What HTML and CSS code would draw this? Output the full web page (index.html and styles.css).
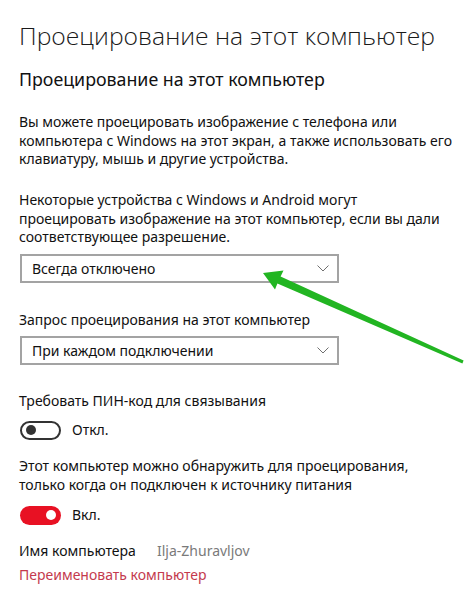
FILE: index.html
```html
<!DOCTYPE html>
<html lang="ru">
<head>
<meta charset="utf-8">
<link rel="stylesheet" href="styles.css">
</head>
<body>
<main class="page">
  <h1 class="title">Проецирование на этот компьютер</h1>
  <h2 class="subtitle">Проецирование на этот компьютер</h2>
  <p class="text p1">Вы можете проецировать изображение с телефона или<br>компьютера с Windows на этот экран, а также использовать его<br>клавиатуру, мышь и другие устройства.</p>
  <p class="text p2">Некоторые устройства с Windows и Android могут<br>проецировать изображение на этот компьютер, если вы дали<br>соответствующее разрешение.</p>
  <div class="select s1"><span>Всегда отключено</span><svg class="chev" width="12" height="7" viewBox="0 0 12 7"><polyline points="0.5,0.5 6,6 11.5,0.5" fill="none" stroke="#707070" stroke-width="1"/></svg></div>
  <p class="text label l1">Запрос проецирования на этот компьютер</p>
  <div class="select s2"><span>При каждом подключении</span><svg class="chev" width="12" height="7" viewBox="0 0 12 7"><polyline points="0.5,0.5 6,6 11.5,0.5" fill="none" stroke="#707070" stroke-width="1"/></svg></div>
  <p class="text label l2">Требовать ПИН-код для связывания</p>
  <div class="toggle-row t1"><span class="toggle off"><span class="knob"></span></span><span class="state">Откл.</span></div>
  <p class="text p3">Этот компьютер можно обнаружить для проецирования,<br>только когда он подключен к источнику питания</p>
  <div class="toggle-row t2"><span class="toggle on"><span class="knob"></span></span><span class="state">Вкл.</span></div>
  <div class="name-row"><span class="name-label">Имя компьютера</span><span class="name-value">Ilja-Zhuravljov</span></div>
  <a class="rename" href="#">Переименовать компьютер</a>
</main>
<svg class="arrow" width="474" height="600" viewBox="0 0 474 600">
  <polygon fill="#22b522" points="263,273 283.5,270.5 280.6,276.6 463.6,360.6 462.4,363.4 277.4,283.4 275,289.5"/>
</svg>
</body>
</html>
```
FILE: styles.css
```css
html, body {
  margin: 0;
  padding: 0;
  background: #ffffff;
}
body {
  font-family: "Noto Sans", "Open Sans", "Liberation Sans", sans-serif;
  color: #111111;
  position: relative;
  width: 474px;
  height: 600px;
  overflow: hidden;
}
.page {
  padding: 20px 0 0 19px;
}
.title {
  margin: 0;
  font-family: "Open Sans", "Noto Sans", sans-serif;
  font-weight: 300;
  font-size: 24.7px;
  line-height: 32px;
  color: #1a1a1a;
  white-space: nowrap;
}
.subtitle {
  margin: 15px 0 0;
  font-weight: 400;
  font-size: 17.8px;
  line-height: 24px;
  color: #111111;
  white-space: nowrap;
}
.text {
  margin: 0;
  font-size: 14px;
  line-height: 18.5px;
  white-space: nowrap;
}
.p1 { margin-top: 22px; }
.p2 { margin-top: 22.8px; }
.p3 { margin-top: 17px; }
.select {
  box-sizing: border-box;
  width: 319px;
  height: 29px;
  margin-left: 1px;
  border: 2px solid #a3a3a3;
  display: flex;
  align-items: center;
  justify-content: space-between;
  padding: 0 8px 0 10px;
  font-size: 14px;
  line-height: 25px;
}
.s1 { margin-top: 7px; }
.l1 { margin-top: 28px; }
.s2 { margin-top: 7px; }
.l2 { margin-top: 27px; }
.toggle-row {
  display: flex;
  align-items: center;
  gap: 11px;
  margin-left: 1px;
  height: 20px;
}
.t1 { margin-top: 9.5px; }
.t2 { margin-top: 11px; }
.toggle {
  box-sizing: border-box;
  width: 41px;
  height: 19px;
  border-radius: 10px;
  display: flex;
  align-items: center;
}
.toggle.off {
  border: 2px solid #333333;
  padding-left: 4px;
}
.toggle.off .knob {
  width: 10px;
  height: 10px;
  border-radius: 50%;
  background: #333333;
}
.toggle.on {
  background: #e81123;
  justify-content: flex-end;
  padding-right: 5px;
}
.toggle.on .knob {
  width: 10px;
  height: 10px;
  border-radius: 50%;
  background: #ffffff;
}
.state {
  font-size: 14px;
  line-height: 20px;
}
.name-row {
  display: flex;
  margin-top: 17px;
  font-size: 14px;
  line-height: 18.5px;
}
.name-label {
  width: 138px;
}
.name-value {
  color: #7a7a7a;
}
.rename {
  display: block;
  margin-top: 5.5px;
  font-size: 14px;
  line-height: 18.5px;
  color: #c43a4e;
  text-decoration: none;
}
.arrow {
  position: absolute;
  left: 0;
  top: 0;
  pointer-events: none;
}
```
